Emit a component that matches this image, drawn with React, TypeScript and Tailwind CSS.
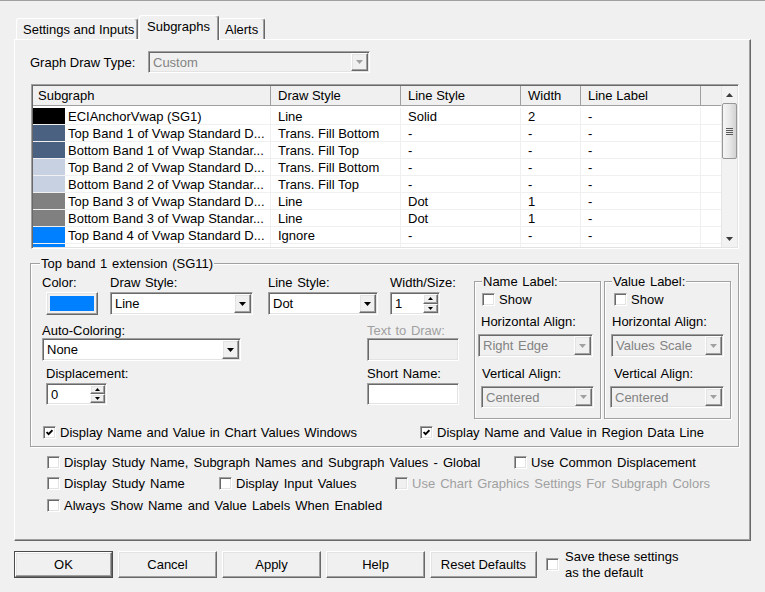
import type { ReactNode } from "react";

// Klasyczne obramowania Windows (wklęsłe / wypukłe)
const SUNKEN =
  "border border-t-[#a0a0a0] border-l-[#a0a0a0] border-r-white border-b-white shadow-[inset_1px_1px_0_#696969,inset_-1px_-1px_0_#e3e3e3]";
const RAISED =
  "border border-t-white border-l-white border-r-[#696969] border-b-[#696969] shadow-[inset_-1px_-1px_0_#a0a0a0,inset_1px_1px_0_#e3e3e3] bg-[#f0f0f0]";

function Arrow({ up, color = "#000" }: { up?: boolean; color?: string }) {
  return (
    <svg width="7" height="4" viewBox="0 0 7 4">
      <polygon points={up ? "3.5,0 7,4 0,4" : "0,0 7,0 3.5,4"} fill={color} />
    </svg>
  );
}

function Combo({ text, className, disabled }: { text: string; className: string; disabled?: boolean }) {
  return (
    <div className={`${SUNKEN} p-[1px] flex ${disabled ? "bg-[#f0f0f0] text-[#838383]" : "bg-white"} ${className}`}>
      <span className="flex-1 self-center pl-[3px] whitespace-nowrap overflow-hidden">{text}</span>
      <div className={`${RAISED} w-[17px] flex-none flex items-center justify-center`}>
        <Arrow color={disabled ? "#a0a0a0" : "#000"} />
      </div>
    </div>
  );
}

function Spin({ value, className }: { value: string; className: string }) {
  return (
    <div className={`${SUNKEN} p-[1px] flex bg-white ${className}`}>
      <span className="flex-1 self-center pl-[3px]">{value}</span>
      <div className="w-[15px] flex-none flex flex-col">
        <div className={`${RAISED} flex-1 flex items-center justify-center`}>
          <svg width="5" height="3" viewBox="0 0 5 3"><polygon points="2.5,0 5,3 0,3" fill="#000" /></svg>
        </div>
        <div className={`${RAISED} flex-1 flex items-center justify-center`}>
          <svg width="5" height="3" viewBox="0 0 5 3"><polygon points="0,0 5,0 2.5,3" fill="#000" /></svg>
        </div>
      </div>
    </div>
  );
}

function Check({ label, checked, disabled, className = "" }: { label: string; checked?: boolean; disabled?: boolean; className?: string }) {
  return (
    <div className={`flex items-center gap-[4px] ${className}`}>
      <span className={`${SUNKEN} w-[13px] h-[13px] flex-none flex items-center justify-center ${disabled ? "bg-[#f0f0f0]" : "bg-white"}`}>
        {checked && (
          <svg width="7" height="7" viewBox="0 0 7 7">
            <polyline points="0.6,3 2.6,5.2 6.4,1.2" fill="none" stroke="#000" strokeWidth="1.8" />
          </svg>
        )}
      </span>
      <span className={`whitespace-nowrap ${disabled ? "text-[#a0a0a0]" : ""}`}>{label}</span>
    </div>
  );
}

function Group({ title, legendClass, className, children }: { title: string; legendClass: string; className: string; children: ReactNode }) {
  return (
    <div className={`relative border border-[#a0a0a0] shadow-[inset_1px_1px_0_#fff,1px_1px_0_#fff] ${className}`}>
      <span className={`absolute -top-[8px] ${legendClass} bg-[#f0f0f0] px-[1px] whitespace-nowrap`}>{title}</span>
      {children}
    </div>
  );
}

function Button({ label, className, def }: { label: string; className: string; def?: boolean }) {
  const face = <div className={`${RAISED} w-full h-full flex items-center justify-center`}>{label}</div>;
  return <div className={`h-[27px] ${def ? "border border-[#4a4a4a]" : ""} ${className}`}>{face}</div>;
}

function ScrollBar() {
  return (
    <div className="w-[16px] flex-none flex flex-col bg-[#f2f2f2] border-l border-[#e6e6e6]">
      <div className="h-[17px] flex items-center justify-center"><Arrow up color="#3c3c3c" /></div>
      <div className="h-[56px] rounded-[2px] border border-[#979797] bg-gradient-to-r from-[#f5f5f5] via-[#e8e8e8] to-[#d2d2d2] flex flex-col items-center justify-center gap-[1px]">
        <div className="w-[7px] h-[1px] bg-[#5a5a5a]" />
        <div className="w-[7px] h-[1px] bg-[#5a5a5a]" />
        <div className="w-[7px] h-[1px] bg-[#5a5a5a]" />
        <div className="w-[7px] h-[1px] bg-[#5a5a5a]" />
      </div>
      <div className="flex-1" />
      <div className="h-[17px] flex items-center justify-center"><Arrow color="#3c3c3c" /></div>
    </div>
  );
}

const COLS = ["w-[238px]", "w-[130px]", "w-[120px]", "w-[60px]", "w-[120px]", "w-[20px]"];
const HEAD = ["Subgraph", "Draw Style", "Line Style", "Width", "Line Label", ""];

const ROWS = [
  { c: "bg-black", name: "ECIAnchorVwap (SG1)", draw: "Line", line: "Solid", w: "2" },
  { c: "bg-[#4a6181]", name: "Top Band 1 of Vwap Standard D...", draw: "Trans. Fill Bottom", line: "-", w: "-" },
  { c: "bg-[#4a6181]", name: "Bottom Band 1 of Vwap Standar...", draw: "Trans. Fill Top", line: "-", w: "-" },
  { c: "bg-[#c8d1e1]", name: "Top Band 2 of Vwap Standard D...", draw: "Trans. Fill Bottom", line: "-", w: "-" },
  { c: "bg-[#c8d1e1]", name: "Bottom Band 2 of Vwap Standar...", draw: "Trans. Fill Top", line: "-", w: "-" },
  { c: "bg-[#808080]", name: "Top Band 3 of Vwap Standard D...", draw: "Line", line: "Dot", w: "1" },
  { c: "bg-[#808080]", name: "Bottom Band 3 of Vwap Standar...", draw: "Line", line: "Dot", w: "1" },
  { c: "bg-[#0080ff]", name: "Top Band 4 of Vwap Standard D...", draw: "Ignore", line: "-", w: "-" },
  { c: "bg-[#0080ff]", name: "Bottom Band 4 of Vwap Standar...", draw: "Ignore", line: "-", w: "-" },
];

const TAB =
  "flex border-l border-t border-r border-l-white border-t-white border-r-[#696969] rounded-t-[3px] shadow-[inset_-1px_0_0_#a0a0a0] bg-[#f0f0f0] whitespace-nowrap";

export default function App() {
  return (
    <div className="w-[765px] h-[592px] overflow-hidden bg-[#f0f0f0] border-t border-[#a0a0a0] font-['Liberation_Sans',Arial,sans-serif] text-[13px] leading-[15px] text-black flex flex-col">
      {/* zakładki */}
      <div className="relative z-10 mt-[14px] -mb-[1px] h-[25px] pl-[16px] flex items-end">
        <div className={`${TAB} w-[122px] h-[21px] mb-[1px] pl-[6px] items-center`}>Settings and Inputs</div>
        <div className="w-[1px]" />
        <div className={`${TAB} w-[80px] h-[25px] pl-[7px] pt-[3px] items-start`}>Subgraphs</div>
        <div className={`${TAB} w-[46px] h-[21px] mb-[1px] pl-[5px] items-center`}>Alerts</div>
      </div>

      {/* panel zakładki */}
      <div className="ml-[14px] w-[737px] h-[502px] flex-none border border-t-white border-l-white border-r-[#696969] border-b-[#696969] shadow-[inset_-1px_-1px_0_#a0a0a0] flex flex-col">
        <div className="mt-[11px] flex items-center h-[22px]">
          <span className="ml-[15px] w-[118px]">Graph Draw Type:</span>
          <Combo text="Custom" disabled className="w-[222px] h-[22px]" />
        </div>

        {/* lista subgrafów */}
        <div className={`${SUNKEN} mt-[11px] ml-[16px] w-[708px] h-[165px] flex-none bg-white p-[1px] flex`}>
          <div className="w-[688px] flex flex-col overflow-hidden">
            <div className="flex h-[20px] flex-none bg-[#f0f0f0] border-b border-[#a0a0a0]">
              {HEAD.map((h, i) => (
                <div
                  key={i}
                  className={`${COLS[i]} flex-none flex items-center whitespace-nowrap ${i === 0 ? "pl-[5px]" : "pl-[7px]"} ${i < 5 ? "border-r border-[#a0a0a0]" : ""}`}
                >
                  {h}
                </div>
              ))}
            </div>
            <div className="pt-[2px] flex flex-col">
              {ROWS.map((r, i) => (
                <div key={i} className="flex h-[17px] flex-none border-b border-[#f0f0f0]">
                  <div className={`${COLS[0]} flex-none flex items-center border-r border-[#f0f0f0] overflow-hidden whitespace-nowrap`}>
                    <div className={`w-[32px] h-full flex-none ${r.c}`} />
                    <span className="pl-[3px]">{r.name}</span>
                  </div>
                  <div className={`${COLS[1]} flex-none flex items-center pl-[7px] border-r border-[#f0f0f0] whitespace-nowrap`}>{r.draw}</div>
                  <div className={`${COLS[2]} flex-none flex items-center pl-[7px] border-r border-[#f0f0f0]`}>{r.line}</div>
                  <div className={`${COLS[3]} flex-none flex items-center pl-[7px] border-r border-[#f0f0f0]`}>{r.w}</div>
                  <div className={`${COLS[4]} flex-none flex items-center pl-[7px] border-r border-[#f0f0f0]`}>-</div>
                  <div className={`${COLS[5]} flex-none`} />
                </div>
              ))}
            </div>
          </div>
          <ScrollBar />
        </div>

        {/* ustawienia wybranego subgrafu */}
        <Group title="Top band 1 extension (SG11)" legendClass="left-[9px]" className="mt-[14px] ml-[15px] w-[709px] h-[184px] flex-none pl-[11px] pt-[11px] [word-spacing:1px]">
          <div className="flex">
            <div className="w-[432px] flex-none">
              <div className="flex h-[15px]">
                <span className="w-[68px]">Color:</span>
                <span className="w-[158px]">Draw Style:</span>
                <span className="w-[122px]">Line Style:</span>
                <span>Width/Size:</span>
              </div>
              <div className="mt-[2px] flex">
                <div className={`${RAISED} ml-[4px] w-[52px] h-[23px] p-[3px]`}>
                  <div className="w-full h-full bg-[#0080ff]" />
                </div>
                <Combo text="Line" className="ml-[12px] w-[143px] h-[23px]" />
                <Combo text="Dot" className="ml-[15px] w-[110px] h-[23px]" />
                <Spin value="1" className="ml-[12px] w-[50px] h-[23px]" />
              </div>
              <div className="mt-[8px] flex h-[15px]">
                <span className="w-[325px]">Auto-Coloring:</span>
                <span className="text-[#a0a0a0]">Text to Draw:</span>
              </div>
              <div className="flex">
                <Combo text="None" className="w-[199px] h-[23px]" />
                <div className={`${SUNKEN} ml-[126px] w-[92px] h-[23px] bg-[#f0f0f0]`} />
              </div>
              <div className="mt-[5px] flex h-[15px]">
                <span className="ml-[4px] w-[321px]">Displacement:</span>
                <span>Short Name:</span>
              </div>
              <div className="mt-[2px] flex">
                <Spin value="0" className="ml-[4px] w-[61px] h-[22px]" />
                <div className={`${SUNKEN} ml-[260px] w-[92px] h-[22px] bg-white`} />
              </div>
            </div>

            <div className="mt-[6px] flex gap-[3px]">
              <Group title="Name Label:" legendClass="left-[7px]" className="w-[127px] h-[138px]">
                <Check label="Show" className="mt-[10px] ml-[7px]" />
                <div className="mt-[7px] pl-[6px] whitespace-nowrap">Horizontal Align:</div>
                <Combo text="Right Edge" disabled className="mt-[5px] ml-[3px] w-[115px] h-[23px]" />
                <div className="mt-[9px] pl-[7px] whitespace-nowrap">Vertical Align:</div>
                <Combo text="Centered" disabled className="mt-[5px] ml-[6px] w-[113px] h-[22px]" />
              </Group>
              <Group title="Value Label:" legendClass="left-[7px]" className="w-[127px] h-[138px]">
                <Check label="Show" className="mt-[10px] ml-[9px]" />
                <div className="mt-[7px] pl-[7px] whitespace-nowrap">Horizontal Align:</div>
                <Combo text="Values Scale" disabled className="mt-[5px] ml-[6px] w-[113px] h-[23px]" />
                <div className="mt-[9px] pl-[9px] whitespace-nowrap">Vertical Align:</div>
                <Combo text="Centered" disabled className="mt-[5px] ml-[5px] w-[114px] h-[22px]" />
              </Group>
            </div>
          </div>
          <div className="mt-[5px] flex h-[16px] items-center">
            <Check checked label="Display Name and Value in Chart Values Windows" className="ml-[1px] w-[377px]" />
            <Check checked label="Display Name and Value in Region Data Line" />
          </div>
        </Group>

        {/* opcje globalne */}
        <div className="[word-spacing:1.5px]">
          <div className="mt-[7px] ml-[32px] flex h-[16px] items-center">
            <Check label="Display Study Name, Subgraph Names and Subgraph Values - Global" className="w-[467px]" />
            <Check label="Use Common Displacement" />
          </div>
          <div className="mt-[5px] ml-[32px] flex h-[16px] items-center">
            <Check label="Display Study Name" className="w-[172px]" />
            <Check label="Display Input Values" className="w-[176px]" />
            <Check label="Use Chart Graphics Settings For Subgraph Colors" disabled />
          </div>
          <div className="mt-[6px] ml-[32px] flex h-[16px] items-center">
            <Check label="Always Show Name and Value Labels When Enabled" />
          </div>
        </div>
      </div>

      {/* przyciski */}
      <div className="mt-[10px] ml-[14px] flex items-center gap-[5px] h-[27px]">
        <Button label="OK" def className="w-[99px]" />
        <Button label="Cancel" className="w-[99px]" />
        <Button label="Apply" className="w-[99px]" />
        <Button label="Help" className="w-[99px]" />
        <Button label="Reset Defaults" className="w-[107px]" />
        <div className="ml-[4px] flex items-center gap-[6px]">
          <span className={`${SUNKEN} w-[13px] h-[13px] bg-white flex-none`} />
          <span className="leading-[16px]">Save these settings<br />as the default</span>
        </div>
      </div>
    </div>
  );
}
